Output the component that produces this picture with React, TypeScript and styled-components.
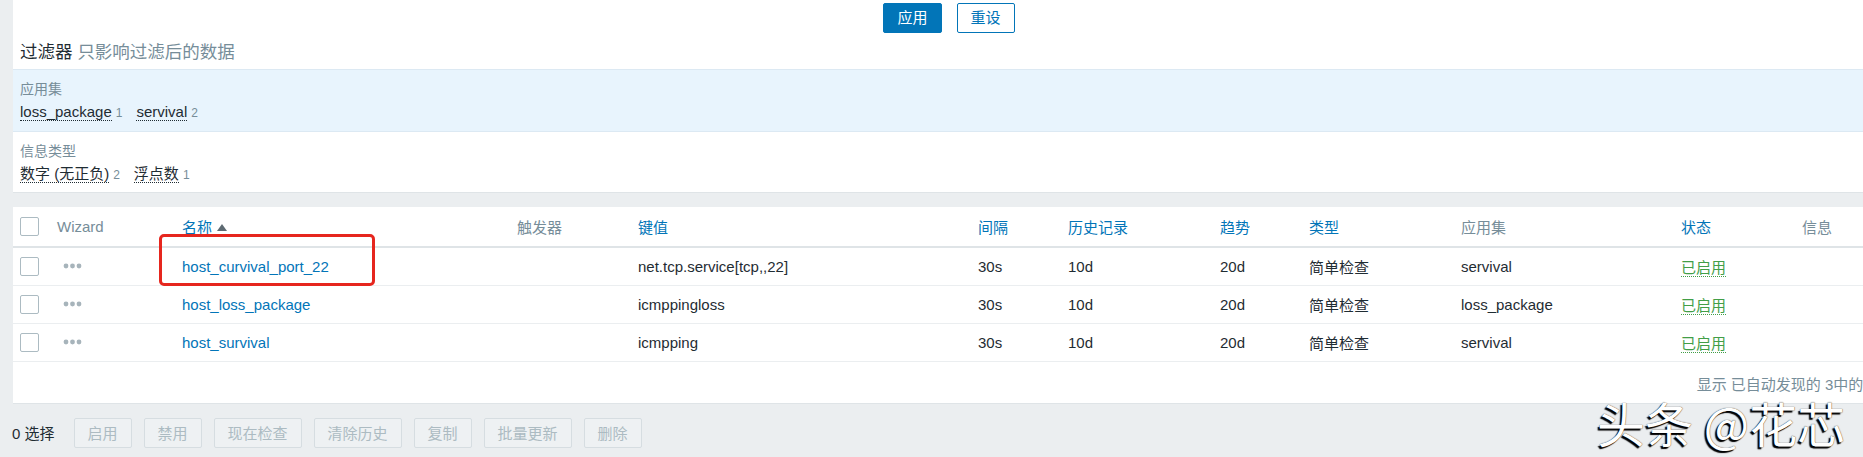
import React from "react";
import styled, { createGlobalStyle } from "styled-components";

const GlobalStyle = createGlobalStyle`
  html, body { margin: 0; padding: 0; background: #ebeef0; overflow: hidden; }
  body {
    font-family: "Liberation Sans", "Noto Sans CJK SC", sans-serif;
    font-size: 15px;
    color: #1f2c33;
  }
  * { box-sizing: border-box; }
`;

const Page = styled.div`
  position: relative;
  width: 1898px;
  height: 457px;
  padding: 0 13px;
`;

const FilterPanel = styled.section`
  background: #fff;
  border-bottom: 1px solid #dfe4e7;
`;

const ButtonRow = styled.div`
  display: flex;
  justify-content: center;
  gap: 15px;
  height: 36px;
  padding-top: 3px;
`;

const Button = styled.button<{ $primary?: boolean }>`
  height: 30px;
  padding: 0 13px;
  font-family: inherit;
  font-size: 15px;
  line-height: 28px;
  border-radius: 2px;
  border: 1px solid #0275b8;
  background: ${(p) => (p.$primary ? "#0275b8" : "#ffffff")};
  color: ${(p) => (p.$primary ? "#ffffff" : "#0275b8")};
`;

const Title = styled.h3`
  margin: 0;
  height: 33px;
  line-height: 33px;
  padding: 0 7px;
  font-size: 17.5px;
  font-weight: normal;
  color: #1f2c33;
  span { color: #768d99; }
`;

const Subfilter = styled.div<{ $active?: boolean }>`
  background: ${(p) => (p.$active ? "#e8f4fd" : "#ffffff")};
  border-top: 1px solid ${(p) => (p.$active ? "#dce9f3" : "transparent")};
  border-bottom: 1px solid ${(p) => (p.$active ? "#dce9f3" : "transparent")};
  padding: ${(p) => (p.$active ? "8px 7px 6px" : "7px 7px 4px")};
`;

const SubLabel = styled.div`
  font-size: 14px;
  line-height: 22px;
  color: #768d99;
`;

const SubValues = styled.div`
  display: flex;
  gap: 14px;
  line-height: 24px;
`;

const SubItem = styled.span`
  white-space: nowrap;
`;

const SubName = styled.span`
  font-size: 15px;
  color: #1f2c33;
  border-bottom: 1px dotted #1f2c33;
`;

const SubCount = styled.span`
  margin-left: 4px;
  font-size: 12px;
  color: #768d99;
`;

const TablePanel = styled.section`
  position: relative;
  margin-top: 14px;
  background: #fff;
  border-bottom: 1px solid #dfe4e7;
`;

const Table = styled.table`
  width: 100%;
  table-layout: fixed;
  border-collapse: collapse;
`;

const Th = styled.th<{ $link?: boolean }>`
  height: 40px;
  padding: 0 7px;
  text-align: left;
  font-weight: normal;
  font-size: 15px;
  color: ${(p) => (p.$link ? "#0275b8" : "#768d99")};
  border-bottom: 2px solid #dfe4e7;
  white-space: nowrap;
`;

const Td = styled.td`
  height: 38px;
  padding: 0 7px;
  font-size: 15px;
  color: #1f2c33;
  border-bottom: 1px solid #ebeef0;
  white-space: nowrap;
`;

const Check = styled.span`
  display: block;
  width: 19px;
  height: 19px;
  border: 1px solid #acbbc2;
  border-radius: 2px;
  background: #fff;
`;

const SortArrow = styled.span`
  display: inline-block;
  margin-left: 5px;
  vertical-align: 2px;
  border-left: 5px solid transparent;
  border-right: 5px solid transparent;
  border-bottom: 7px solid #5d6a72;
`;

const Link = styled.span`
  color: #0275b8;
`;

const Status = styled.span`
  color: #429e47;
  border-bottom: 1px dotted #429e47;
`;

const Dots = styled.svg`
  display: block;
  margin-left: 6px;
`;

const Pager = styled.div`
  height: 41px;
  display: flex;
  justify-content: flex-end;
  align-items: center;
  padding: 2px 0 0 7px;
  font-size: 15px;
  color: #768d99;
  white-space: nowrap;
`;

const Highlight = styled.div`
  position: absolute;
  left: 146px;
  top: 27px;
  width: 216px;
  height: 52px;
  border: 3px solid #e6261e;
  border-radius: 5px;
  pointer-events: none;
`;

const Footer = styled.div`
  display: flex;
  align-items: center;
  gap: 12px;
  padding-top: 14px;
  margin-left: -1px;
`;

const SelectedCount = styled.span`
  font-size: 15px;
  color: #1f2c33;
  margin-right: 7px;
`;

const MassButton = styled.button`
  height: 30px;
  padding: 0 13px;
  font-family: inherit;
  font-size: 15px;
  border: 1px solid #d6dde1;
  border-radius: 2px;
  background: #eef1f3;
  color: #acbbc2;
`;

const Watermark = styled.div`
  position: absolute;
  left: 1597px;
  top: 402px;
  font-family: "Noto Sans CJK SC", sans-serif;
  font-size: 48px;
  line-height: 40px;
  color: #ffffff;
  white-space: nowrap;
  text-shadow: -2px 2px 1px #000, 0 0 1px #000;
  pointer-events: none;
`;

const colWidths = [37, 125, 335, 121, 340, 90, 152, 89, 152, 220, 121, 90];

const headers: { label: string; link?: boolean; sort?: boolean }[] = [
  { label: "Wizard" },
  { label: "名称", link: true, sort: true },
  { label: "触发器" },
  { label: "键值", link: true },
  { label: "间隔", link: true },
  { label: "历史记录", link: true },
  { label: "趋势", link: true },
  { label: "类型", link: true },
  { label: "应用集" },
  { label: "状态", link: true },
  { label: "信息" },
];

const rows = [
  { name: "host_curvival_port_22", key: "net.tcp.service[tcp,,22]", app: "servival" },
  { name: "host_loss_package", key: "icmppingloss", app: "loss_package" },
  { name: "host_survival", key: "icmpping", app: "servival" },
];

const massButtons = ["启用", "禁用", "现在检查", "清除历史", "复制", "批量更新", "删除"];

export default function App() {
  return (
    <>
      <GlobalStyle />
      <Page>
        <FilterPanel>
          <ButtonRow>
            <Button $primary>应用</Button>
            <Button>重设</Button>
          </ButtonRow>
          <Title>
            过滤器 <span>只影响过滤后的数据</span>
          </Title>
          <Subfilter $active>
            <SubLabel>应用集</SubLabel>
            <SubValues>
              <SubItem>
                <SubName>loss_package</SubName>
                <SubCount>1</SubCount>
              </SubItem>
              <SubItem>
                <SubName>servival</SubName>
                <SubCount>2</SubCount>
              </SubItem>
            </SubValues>
          </Subfilter>
          <Subfilter>
            <SubLabel>信息类型</SubLabel>
            <SubValues>
              <SubItem>
                <SubName>数字 (无正负)</SubName>
                <SubCount>2</SubCount>
              </SubItem>
              <SubItem>
                <SubName>浮点数</SubName>
                <SubCount>1</SubCount>
              </SubItem>
            </SubValues>
          </Subfilter>
        </FilterPanel>

        <TablePanel>
          <Table>
            <colgroup>
              {colWidths.map((w, i) => (
                <col key={i} style={{ width: w }} />
              ))}
            </colgroup>
            <thead>
              <tr>
                <Th>
                  <Check />
                </Th>
                {headers.map((h) => (
                  <Th key={h.label} $link={h.link}>
                    {h.label}
                    {h.sort && <SortArrow />}
                  </Th>
                ))}
              </tr>
            </thead>
            <tbody>
              {rows.map((r) => (
                <tr key={r.name}>
                  <Td>
                    <Check />
                  </Td>
                  <Td>
                    <Dots width="19" height="6" viewBox="0 0 19 6">
                      <circle cx="3" cy="3" r="2.4" fill="#a7b4bb" />
                      <circle cx="9.5" cy="3" r="2.4" fill="#a7b4bb" />
                      <circle cx="16" cy="3" r="2.4" fill="#a7b4bb" />
                    </Dots>
                  </Td>
                  <Td>
                    <Link>{r.name}</Link>
                  </Td>
                  <Td />
                  <Td>{r.key}</Td>
                  <Td>30s</Td>
                  <Td>10d</Td>
                  <Td>20d</Td>
                  <Td>简单检查</Td>
                  <Td>{r.app}</Td>
                  <Td>
                    <Status>已启用</Status>
                  </Td>
                  <Td />
                </tr>
              ))}
            </tbody>
          </Table>
          <Pager>显示 已自动发现的 3中的1-3</Pager>
          <Highlight />
        </TablePanel>

        <Footer>
          <SelectedCount>0 选择</SelectedCount>
          {massButtons.map((b) => (
            <MassButton key={b}>{b}</MassButton>
          ))}
        </Footer>

        <Watermark>头条 @花芯</Watermark>
      </Page>
    </>
  );
}
